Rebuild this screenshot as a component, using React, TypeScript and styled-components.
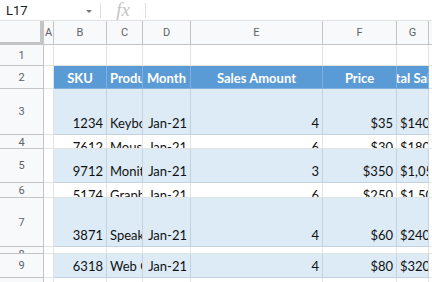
import React from 'react';
import styled, { createGlobalStyle } from 'styled-components';

const GlobalStyle = createGlobalStyle`
    html, body {
        margin: 0;
        padding: 0;
        background: #fff;
        overflow: hidden;
    }
    body {
        font-family: Roboto, "Liberation Sans", sans-serif;
    }
`;

type Tone = 'plain' | 'head' | 'band';
type Align = 'left' | 'center' | 'right';

const COLS = [10, 53, 36, 48, 132, 74, 32, 60];
const LETTERS = ['A', 'B', 'C', 'D', 'E', 'F', 'G', 'H'];

const HEAD_ALIGN: Align[] = ['left', 'center', 'left', 'center', 'center', 'center', 'center', 'left'];
const DATA_ALIGN: Align[] = ['left', 'right', 'left', 'right', 'right', 'right', 'left', 'left'];

const bg = { plain: '#ffffff', head: '#5b9bd5', band: '#ddebf7' };
const line = { plain: '#e2e3e3', head: '#7fb0de', band: '#c4d2df' };
const justify = { left: 'flex-start', center: 'center', right: 'flex-end' };

interface SheetRow {
    n: number;
    h: number;
    kind: 'empty' | 'head' | 'data';
    band?: boolean;
    cells?: string[];
}

const ROWS: SheetRow[] = [
    { n: 1, h: 21, kind: 'empty' },
    { n: 2, h: 23, kind: 'head', cells: ['', 'SKU', 'Product', 'Month', 'Sales Amount', 'Price', 'Total Sales'] },
    { n: 3, h: 46, kind: 'data', band: true, cells: ['', '1234', 'Keyboard', 'Jan-21', '4', '$35', '$140'] },
    { n: 4, h: 14, kind: 'data', cells: ['', '7612', 'Mouse', 'Jan-21', '6', '$30', '$180'] },
    { n: 5, h: 34, kind: 'data', band: true, cells: ['', '9712', 'Monitor', 'Jan-21', '3', '$350', '$1,050'] },
    { n: 6, h: 15, kind: 'data', cells: ['', '5174', 'Graphics Card', 'Jan-21', '6', '$250', '$1,500'] },
    { n: 7, h: 49, kind: 'data', band: true, cells: ['', '3871', 'Speakers', 'Jan-21', '4', '$60', '$240'] },
    { n: 8, h: 7, kind: 'data', cells: ['', '2789', 'Headphones', 'Jan-21', '5', '$45', '$225'] },
    { n: 9, h: 24, kind: 'data', band: true, cells: ['', '6318', 'Web Camera', 'Jan-21', '4', '$80', '$320'] },
    { n: 10, h: 21, kind: 'empty' },
];

const Page = styled.div`
    width: 432px;
    height: 282px;
    overflow: hidden;
    background: #fff;
`;

const FormulaBar = styled.div`
    height: 21px;
    box-sizing: border-box;
    border-bottom: 1px solid #e1e1e1;
    display: flex;
    align-items: center;
`;

const NameBox = styled.div`
    width: 100px;
    box-sizing: border-box;
    padding: 0 8px 0 6px;
    display: flex;
    align-items: center;
    justify-content: space-between;
    font-size: 13px;
    color: #202124;
`;

const Caret = styled.span`
    width: 0;
    height: 0;
    border-left: 3px solid transparent;
    border-right: 3px solid transparent;
    border-top: 3px solid #777;
    margin-top: 2px;
`;

const Divider = styled.span`
    width: 1px;
    height: 15px;
    background: #e0e0e0;
`;

const Fx = styled.span`
    width: 44px;
    text-align: center;
    font-family: "Liberation Serif", serif;
    font-style: italic;
    font-size: 19px;
    line-height: 19px;
    color: #c4c4c4;
    margin-top: -2px;
`;

const Row = styled.div<{ $h: number }>`
    display: flex;
    height: ${p => p.$h}px;
`;

const Corner = styled.div`
    width: 44px;
    flex: none;
    box-sizing: border-box;
    background: #f8f9fa;
    border-right: 4px solid #c4c4c4;
    border-bottom: 3px solid #c4c4c4;
`;

const ColHead = styled.div<{ $w: number }>`
    width: ${p => p.$w}px;
    flex: none;
    box-sizing: border-box;
    background: #f8f9fa;
    border-right: 1px solid #c4c4c4;
    border-bottom: 1px solid #c4c4c4;
    display: flex;
    align-items: center;
    justify-content: center;
    font-size: 11px;
    color: #5f6368;
`;

const RowHead = styled.div`
    width: 44px;
    flex: none;
    box-sizing: border-box;
    background: #f8f9fa;
    border-right: 1px solid #c4c4c4;
    border-bottom: 1px solid #c4c4c4;
    display: flex;
    flex-direction: column;
    overflow: hidden;
`;

const RowNum = styled.div`
    flex: 1 0 14px;
    display: flex;
    align-items: center;
    justify-content: center;
    font-size: 11px;
    color: #5f6368;
`;

const Cell = styled.div<{ $w: number; $tone: Tone }>`
    width: ${p => p.$w}px;
    flex: none;
    box-sizing: border-box;
    background: ${p => bg[p.$tone]};
    border-right: 1px solid ${p => line[p.$tone]};
    border-bottom: 1px solid ${p => line[p.$tone]};
    display: flex;
    flex-direction: column;
    overflow: hidden;
`;

const CellText = styled.div<{ $align: Align; $head?: boolean }>`
    margin-top: auto;
    flex-shrink: 0;
    height: 23px;
    box-sizing: border-box;
    padding: 1px 3px 0;
    display: flex;
    justify-content: ${p => justify[p.$align]};
    font-family: Lato, "Liberation Sans", sans-serif;
    font-size: 13px;
    line-height: 22px;
    white-space: nowrap;
    font-weight: ${p => (p.$head ? 700 : 400)};
    color: ${p => (p.$head ? '#ffffff' : '#111')};

    & > span {
        flex-shrink: 0;
    }
`;

const toneFor = (row: SheetRow, i: number): Tone => {
    if (i === 0 || i > 6 || row.kind === 'empty') return 'plain';
    if (row.kind === 'head') return 'head';
    return row.band ? 'band' : 'plain';
};

const App: React.FC = () => {
    return (
        <Page>
            <GlobalStyle />
            <FormulaBar>
                <NameBox>
                    L17
                    <Caret />
                </NameBox>
                <Divider />
                <Fx>fx</Fx>
                <Divider />
            </FormulaBar>

            <Row $h={24}>
                <Corner />
                {COLS.map((w, i) => (
                    <ColHead key={LETTERS[i]} $w={w}>{LETTERS[i]}</ColHead>
                ))}
            </Row>

            {ROWS.map(row => (
                <Row key={row.n} $h={row.h}>
                    <RowHead>
                        <RowNum>{row.n}</RowNum>
                    </RowHead>
                    {COLS.map((w, i) => {
                        const text = row.cells?.[i] ?? '';
                        const head = row.kind === 'head';
                        return (
                            <Cell key={i} $w={w} $tone={toneFor(row, i)}>
                                {text && (
                                    <CellText $align={head ? HEAD_ALIGN[i] : DATA_ALIGN[i]} $head={head}>
                                        <span>{text}</span>
                                    </CellText>
                                )}
                            </Cell>
                        );
                    })}
                </Row>
            ))}
        </Page>
    );
};

export default App;
